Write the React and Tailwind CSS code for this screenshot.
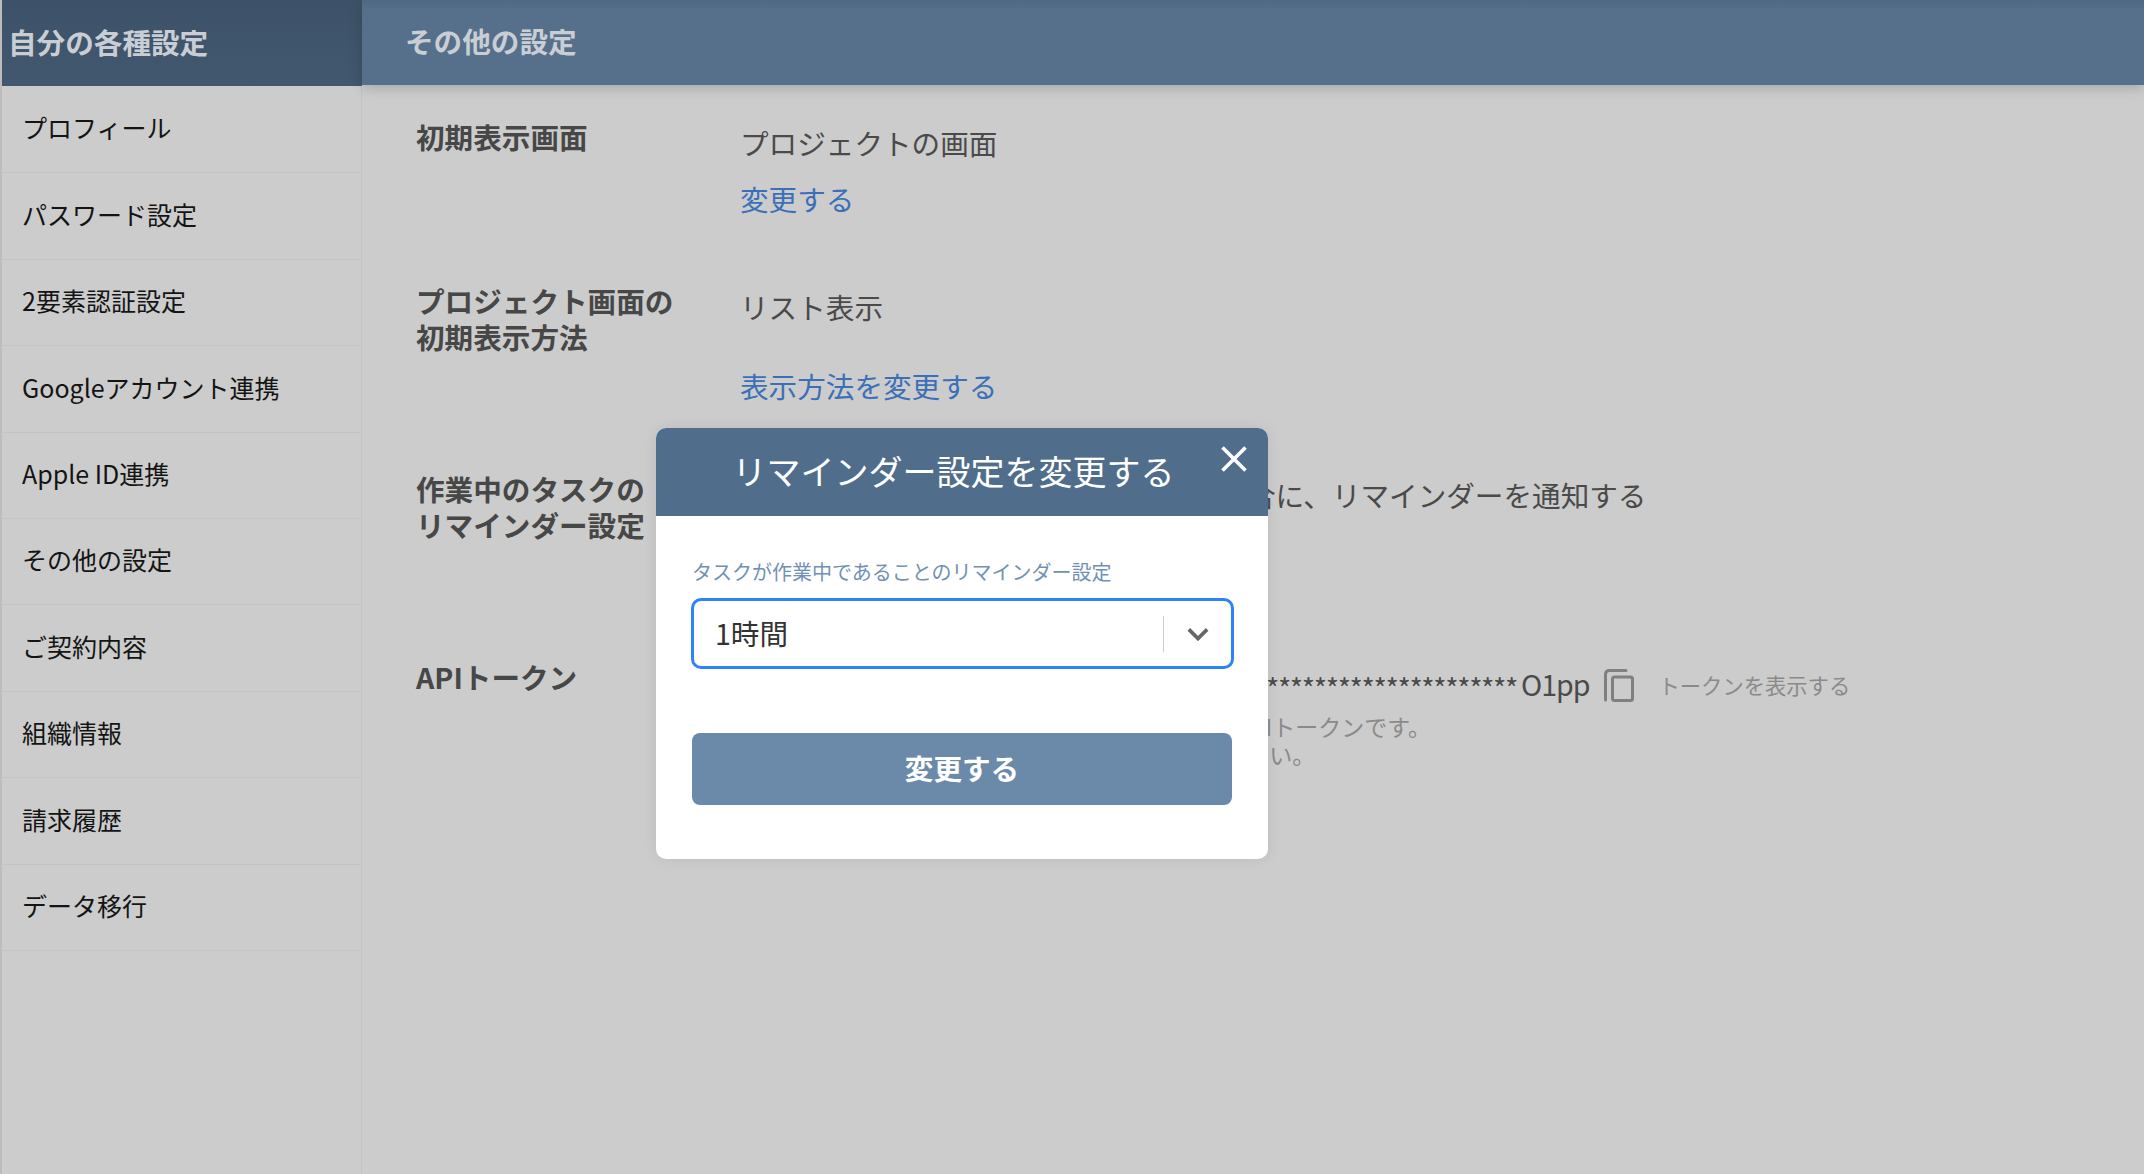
const FONT = '[font-family:"Noto_Sans_CJK_JP","Noto_Sans",sans-serif]';

const menu = [
  'プロフィール',
  'パスワード設定',
  '2要素認証設定',
  'Googleアカウント連携',
  'Apple ID連携',
  'その他の設定',
  'ご契約内容',
  '組織情報',
  '請求履歴',
  'データ移行',
];

function Sidebar() {
  return (
    <aside className="flex h-full w-[362px] shrink-0">
      <div className="h-full w-[2px] bg-[#bdbdbd]" />
      <div className="flex flex-1 flex-col">
        <div className="flex h-[86px] items-center bg-gradient-to-b from-[#3d5268] to-[#42586f] pb-[2px] pl-[6px] text-[28.6px] font-bold text-[#c9ced4]">
          自分の各種設定
        </div>
        <ul className="flex-1 border-r border-[#c4c4c4] pt-[1px]">
          {menu.map((m) => (
            <li
              key={m}
              className="flex h-[86.4px] items-center border-b border-[#c4c4c4] pb-[3px] pl-[20px] text-[25px] text-[#141414]"
            >
              {m}
            </li>
          ))}
        </ul>
      </div>
    </aside>
  );
}

function Row({ label, height, children }) {
  return (
    <div className="flex" style={{ height }}>
      <div className="w-[324px] shrink-0 text-[28.6px] leading-[36px] font-bold text-[#474747]">
        {label}
      </div>
      <div className="flex-1 text-[28.6px] leading-[36px] text-[#4a4a4a]">{children}</div>
    </div>
  );
}

function Main() {
  return (
    <main className="flex h-full flex-1 flex-col">
      <div className="flex h-[85px] items-center bg-gradient-to-b from-[#4e6882] via-[#56708b] via-[12%] to-[#56708b] pb-[2px] pl-[43px] text-[28.6px] font-bold text-[#c9ced4] shadow-[0_3px_12px_rgba(0,0,0,0.18)]">
        その他の設定
      </div>
      <div className="pt-[34px] pl-[54px]">
        <Row label="初期表示画面" height={164}>
          <div className="mt-[6px]">プロジェクトの画面</div>
          <div className="mt-[20px] text-[#3b70b8]">変更する</div>
        </Row>
        <Row
          label={
            <>
              プロジェクト画面の
              <br />
              初期表示方法
            </>
          }
          height={188}
        >
          <div className="mt-[6px]">リスト表示</div>
          <div className="mt-[43px] text-[#3b70b8]">表示方法を変更する</div>
        </Row>
        <Row
          label={
            <>
              作業中のタスクの
              <br />
              リマインダー設定
            </>
          }
          height={188}
        >
          <div className="mt-[6px] ml-[5px] whitespace-nowrap">
            タスクが作業中のまま1時間経過した場合に、リマインダーを通知する
          </div>
        </Row>
        <Row label="APIトークン" height={200}>
          <div className="mt-[9px] flex h-[36px] items-center">
            <span className="whitespace-nowrap">
              <span className="align-[-4px] tracking-[-1.4px]">
                *****************************************************************
              </span>
              <span className="ml-[4px] tracking-[-1px]">O1pp</span>
            </span>
            <svg viewBox="0 0 30 33" className="ml-[14px] h-[33px] w-[30px] -translate-y-[1px] text-[#808080]" fill="none" stroke="currentColor" strokeWidth="3">
              <path d="M1.5 31V5.5Q1.5 1.5 5.5 1.5H22" strokeLinecap="round" />
              <rect x="8.5" y="8" width="20" height="23.5" rx="2" />
            </svg>
            <span className="ml-[25px] pb-[4px] text-[21.3px] leading-[29px] text-[#8a8a8a]">トークンを表示する</span>
          </div>
          <div className="mt-[8px] text-[23px] leading-[28px] whitespace-nowrap text-[#8a8a8a]">
            <div className="ml-[14px]">トークンは外部のサービスと連携時に使用するAPIトークンです。</div>
            <div className="ml-[2px]">他人に知られないよう、取り扱いに注意してください。</div>
          </div>
        </Row>
      </div>
    </main>
  );
}

function Modal() {
  return (
    <div className="absolute top-[428px] left-[656px] h-[431px] w-[612px] overflow-hidden rounded-[10px] bg-white shadow-[0_0_14px_rgba(0,0,0,0.08)]">
      <div className="relative flex h-[88px] items-center justify-center bg-[#506e8c] pr-[17px] pb-[4px] text-[34px] text-white">
        リマインダー設定を変更する
        <svg viewBox="0 0 26 26" className="absolute top-[18px] right-[21px] h-[26px] w-[26px]" fill="none" stroke="white" strokeWidth="3.6">
          <path d="M1.5 1.5L24.5 24.5M24.5 1.5L1.5 24.5" />
        </svg>
      </div>
      <div className="px-[35px] pt-[42px]">
        <div className="pl-[1px] text-[20px] leading-[28px] text-[#7091b5]">
          タスクが作業中であることのリマインダー設定
        </div>
        <div className="mt-[12px] -mr-[1px] flex h-[71px] items-center rounded-[10px] border-[3px] border-[#2f83f8] bg-white pl-[21px]">
          <span className="flex-1 text-[28.6px] text-[#333333]">1時間</span>
          <span className="h-[36px] w-[1px] bg-[#cccccc]" />
          <svg viewBox="0 0 24 14" className="mr-[22px] ml-[23px] h-[14px] w-[22px]" fill="none" stroke="#666666" strokeWidth="4">
            <path d="M2 2L12 12L22 2" />
          </svg>
        </div>
        <button className="mt-[64px] ml-[1px] flex h-[72px] w-[540px] items-center justify-center rounded-[8px] bg-[#6b8aaa] pb-[2px] text-[28.6px] font-bold text-white">
          変更する
        </button>
      </div>
    </div>
  );
}

export default function App() {
  return (
    <div className={`relative flex h-[1174px] w-[2144px] overflow-hidden bg-[#cccccc] ${FONT}`}>
      <Sidebar />
      <Main />
      <Modal />
    </div>
  );
}
